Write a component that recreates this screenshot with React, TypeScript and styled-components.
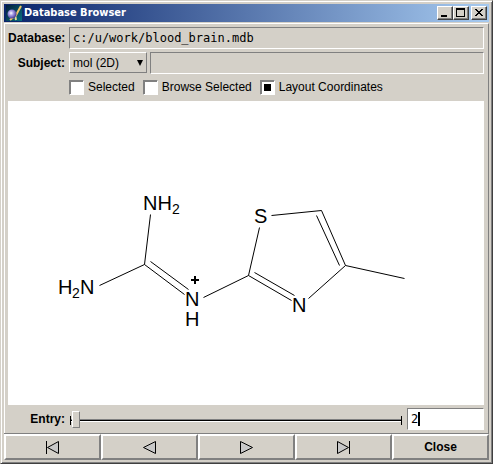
import React from 'react';
import styled, { createGlobalStyle } from 'styled-components';

const face = '#d4d0c8';
const shade = '#808080';
const sans = '"Liberation Sans", Arial, sans-serif';

const GlobalStyle = createGlobalStyle`
  * { box-sizing: border-box; }
  body { margin: 0; background: ${face}; font: 12px/16px ${sans}; color: #000; }
`;

const Frame = styled.main`
  display: flex;
  flex-direction: column;
  min-height: 100vh;
  padding: 2px;
  background: ${face};
  border: 1px solid;
  border-color: ${face} #404040 #404040 ${face};
  box-shadow: inset 1px 1px #fff, inset -1px -1px ${shade};
`;

const Inner = styled.div`
  display: flex;
  flex-direction: column;
  flex: 1;
  padding: 1px;
`;

const TitleBar = styled.header`
  display: flex;
  align-items: center;
  height: 18px;
  padding-right: 2px;
  background: linear-gradient(to right, #0a246a, #a6caf0);
`;

const AppIcon = styled.svg`
  flex: none;
  width: 16px;
  height: 16px;
  margin: 0 2px;
`;

const Title = styled.h1`
  flex: 1;
  margin: 0;
  color: #fff;
  font: bold 11px/16px "DejaVu Sans Condensed", "Noto Sans", sans-serif;
`;

const CaptionButton = styled.button<{ $gap?: boolean }>`
  display: flex;
  width: 16px;
  height: 14px;
  margin: 0 0 0 ${(p) => (p.$gap ? 2 : 0)}px;
  padding: 0;
  background: ${face};
  border: 1px solid;
  border-color: #fff #404040 #404040 #fff;
  box-shadow: inset -1px -1px ${shade};
`;

const Panel = styled.section`
  display: flex;
  flex-direction: column;
  flex: 1;
  margin-top: 1px;
  border: 1px solid;
  border-color: #fff ${shade} ${shade} #fff;
  border-bottom: 0;
`;

const Form = styled.div`
  display: grid;
  grid-template-columns: 57px minmax(0, 1fr);
  column-gap: 4px;
  row-gap: 3px;
  padding: 3px 4px 5px 3px;
  align-items: center;
`;

const Label = styled.label`
  font-weight: bold;
  text-align: right;
  white-space: nowrap;
`;

const Field = styled.input`
  flex: 1;
  width: 100%;
  min-width: 0;
  height: 22px;
  padding: 0 3px;
  background: ${face};
  border: 1px solid;
  border-color: ${shade} #fff #fff ${shade};
  border-radius: 0;
  outline: 0;
  color: #000;
  font: 12px/16px "DejaVu Sans Mono", monospace;
`;

const Line = styled.div`
  display: flex;
  gap: 3px;
`;

const SelectWrap = styled.div`
  position: relative;
  width: 78px;
`;

const Select = styled.select`
  appearance: none;
  display: block;
  width: 100%;
  height: 21px;
  padding: 0 3px;
  background: ${face};
  border: 1px solid;
  border-color: #fff ${shade} ${shade} #fff;
  border-radius: 0;
  color: #000;
  font: 12px/16px ${sans};
`;

const Arrow = styled.svg`
  position: absolute;
  right: 4px;
  top: 8px;
  width: 7px;
  height: 7px;
  pointer-events: none;
`;

const Checks = styled.div`
  display: flex;
  grid-column: 2;
  flex-wrap: wrap;
  column-gap: 8px;
  padding-top: 1px;
`;

const CheckLabel = styled.label`
  display: flex;
  align-items: center;
  gap: 4px;
  height: 18px;
  white-space: nowrap;
`;

const Check = styled.input`
  appearance: none;
  width: 15px;
  height: 15px;
  margin: 0;
  background: #fff;
  border: 1px solid;
  border-color: ${shade} #fff #fff ${shade};
  box-shadow: inset 1px 1px ${shade};

  &:checked {
    padding: 3px;
    background: #000 content-box;
    background-clip: content-box;
    border-color: ${shade} #fff #fff ${shade};
    box-shadow: inset 1px 1px ${shade}, inset 0 0 0 3px #fff;
  }
`;

const Canvas = styled.div`
  position: relative;
  flex: 1;
  min-height: 200px;
  margin: 0 4px 0 3px;
  background: #fff;
`;

const Molecule = styled.svg`
  position: absolute;
  inset: 0;
  width: 100%;
  height: 100%;
`;

const EntryRow = styled.div`
  display: grid;
  grid-template-columns: 57px minmax(0, 1fr) 77px;
  column-gap: 4px;
  align-items: center;
  height: 28px;
  padding: 0 4px 0 3px;
`;

const Slider = styled.input`
  appearance: none;
  width: 100%;
  height: 17px;
  margin: 0;
  background:
    linear-gradient(#000, #000) 1px 5px / 1px 9px no-repeat,
    linear-gradient(#000, #000) calc(100% - 1px) 5px / 1px 9px no-repeat,
    linear-gradient(${shade} 1px, #000 1px, #000 2px, #fff 2px) 1px 8px / calc(100% - 2px) 3px no-repeat;

  &::-webkit-slider-thumb {
    appearance: none;
    width: 8px;
    height: 17px;
    background: ${face};
    border: 1px solid;
    border-color: #fff ${shade} ${shade} #fff;
  }
`;

const EntryBox = styled.div`
  position: relative;
`;

const EntryField = styled(Field)`
  display: block;
  background: #fff;
`;

const Caret = styled.span`
  position: absolute;
  left: 11px;
  top: 4px;
  width: 2px;
  height: 14px;
  background: #000;
`;

const Buttons = styled.nav`
  display: grid;
  grid-template-columns: repeat(5, 1fr);
  border-top: 1px solid ${shade};
  margin: 0 -1px;
`;

const Button = styled.button`
  display: flex;
  align-items: center;
  justify-content: center;
  height: 26px;
  padding: 0;
  background: ${face};
  border: 2px solid;
  border-color: #fff ${shade} ${shade} #fff;
  color: #000;
  font: bold 12px/16px ${sans};
`;

const Glyph = styled.svg`
  width: 15px;
  height: 15px;
  fill: #c8c8c8;
  stroke: #000;
`;

const bonds = [
  [142, 113, 136, 163],
  [136, 163, 91, 184],
  [136, 163, 176, 193],
  [142, 160, 180, 188],
  [195, 196, 240, 174],
  [240, 174, 251, 126],
  [263, 114, 313, 109],
  [313, 109, 337, 164],
  [308, 114, 331, 164],
  [337, 164, 300, 197],
  [240, 174, 283, 199],
  [246, 171, 286, 194],
  [337, 164, 396, 177],
];

const atoms: [number, number, string][] = [
  [135, 109, 'NH'],
  [50, 193, 'H'],
  [72, 193, 'N'],
  [177, 205, 'N'],
  [177, 225, 'H'],
  [246, 122, 'S'],
  [284, 211, 'N'],
];

function Structure() {
  return (
    <Molecule viewBox="0 0 476 304" role="img" aria-label="Molecule structure">
      <g stroke="#000" strokeWidth="1">
        {bonds.map(([x1, y1, x2, y2], i) => (
          <line key={i} x1={x1 + 0.5} y1={y1 + 0.5} x2={x2 + 0.5} y2={y2 + 0.5} />
        ))}
      </g>
      <g fontFamily='"Liberation Sans", Arial, sans-serif' fontSize="20">
        {atoms.map(([x, y, t], i) => (
          <text key={i} x={x} y={y}>{t}</text>
        ))}
        <text x="164" y="113" fontSize="14">2</text>
        <text x="64" y="197" fontSize="14">2</text>
      </g>
      <path d="M183 179h8M187 175v8" stroke="#000" strokeWidth="2" />
    </Molecule>
  );
}

export default function App() {
  return (
    <>
      <GlobalStyle />
      <Frame>
        <Inner>
          <TitleBar>
            <AppIcon viewBox="0 0 16 16" aria-hidden="true">
              <defs>
                <radialGradient id="ball" cx="0.4" cy="0.4" r="0.6">
                  <stop offset="0" stopColor="#fff" />
                  <stop offset="0.4" stopColor="#aaa0e8" />
                  <stop offset="1" stopColor="#4a3c98" />
                </radialGradient>
                <linearGradient id="sky" x1="0" y1="0" x2="1" y2="1">
                  <stop offset="0" stopColor="#041c38" />
                  <stop offset="1" stopColor="#087080" />
                </linearGradient>
              </defs>
              <rect width="16" height="16" fill="url(#sky)" />
              <path d="M15 1L10 10L4 15" fill="none" stroke="#f0c468" strokeWidth="2" />
              <path d="M9 10L10 15" stroke="#e8dc98" strokeWidth="2" />
              <circle cx="6" cy="9" r="4.500" fill="url(#ball)" />
            </AppIcon>
            <Title>Database Browser</Title>
            <CaptionButton aria-label="Minimize">
              <svg width="14" height="12" viewBox="0 0 14 12"><path d="M3 8h6v2H3z" /></svg>
            </CaptionButton>
            <CaptionButton aria-label="Maximize">
              <svg width="14" height="12" viewBox="0 0 14 12">
                <path d="M2 1h9v9H2zM3 3v6h7V3z" fillRule="evenodd" />
              </svg>
            </CaptionButton>
            <CaptionButton aria-label="Close window" $gap>
              <svg width="14" height="12" viewBox="0 0 14 12" shapeRendering="crispEdges">
                <path d="M3 2h2v1h1v1h2V3h1V2h2v1h-1v1H9v1H8v1h1v1h1v1h1v1H9V8H8V7H6v1H5v1H3V8h1V7h1V6h1V5H5V4H4V3H3z" />
              </svg>
            </CaptionButton>
          </TitleBar>
          <Panel>
            <Form>
              <Label htmlFor="database">Database:</Label>
              <Field id="database" readOnly value="c:/u/work/blood_brain.mdb" />
              <Label htmlFor="subject">Subject:</Label>
              <Line>
                <SelectWrap>
                  <Select id="subject" defaultValue="mol">
                    <option value="mol">mol (2D)</option>
                  </Select>
                  <Arrow viewBox="0 0 7 7" aria-hidden="true"><path d="M1 0h6L4 6z" /></Arrow>
                </SelectWrap>
                <Field aria-label="Subject value" readOnly value="" />
              </Line>
              <Checks>
                <CheckLabel><Check type="checkbox" />Selected</CheckLabel>
                <CheckLabel><Check type="checkbox" />Browse Selected</CheckLabel>
                <CheckLabel><Check type="checkbox" defaultChecked />Layout Coordinates</CheckLabel>
              </Checks>
            </Form>
            <Canvas><Structure /></Canvas>
            <EntryRow>
              <Label htmlFor="entry">Entry:</Label>
              <Slider type="range" aria-label="Entry position" min="1" max="100" defaultValue="2" />
              <EntryBox>
                <EntryField id="entry" defaultValue="2" />
                <Caret />
              </EntryBox>
            </EntryRow>
            <Buttons>
              <Button aria-label="First">
                <Glyph viewBox="0 0 15 15"><path d="M13.500 1.500L2.500 7.500L13.500 13.500zM1.500 1v13" /></Glyph>
              </Button>
              <Button aria-label="Previous">
                <Glyph viewBox="0 0 15 15"><path d="M13.500 1.500L1.500 7.500L13.500 13.500z" /></Glyph>
              </Button>
              <Button aria-label="Next">
                <Glyph viewBox="0 0 15 15"><path d="M1.500 1.500L13.500 7.500L1.500 13.500z" /></Glyph>
              </Button>
              <Button aria-label="Last">
                <Glyph viewBox="0 0 15 15"><path d="M1.500 1.500L12.500 7.500L1.500 13.500zM13.500 1v13" /></Glyph>
              </Button>
              <Button>Close</Button>
            </Buttons>
          </Panel>
        </Inner>
      </Frame>
    </>
  );
}
